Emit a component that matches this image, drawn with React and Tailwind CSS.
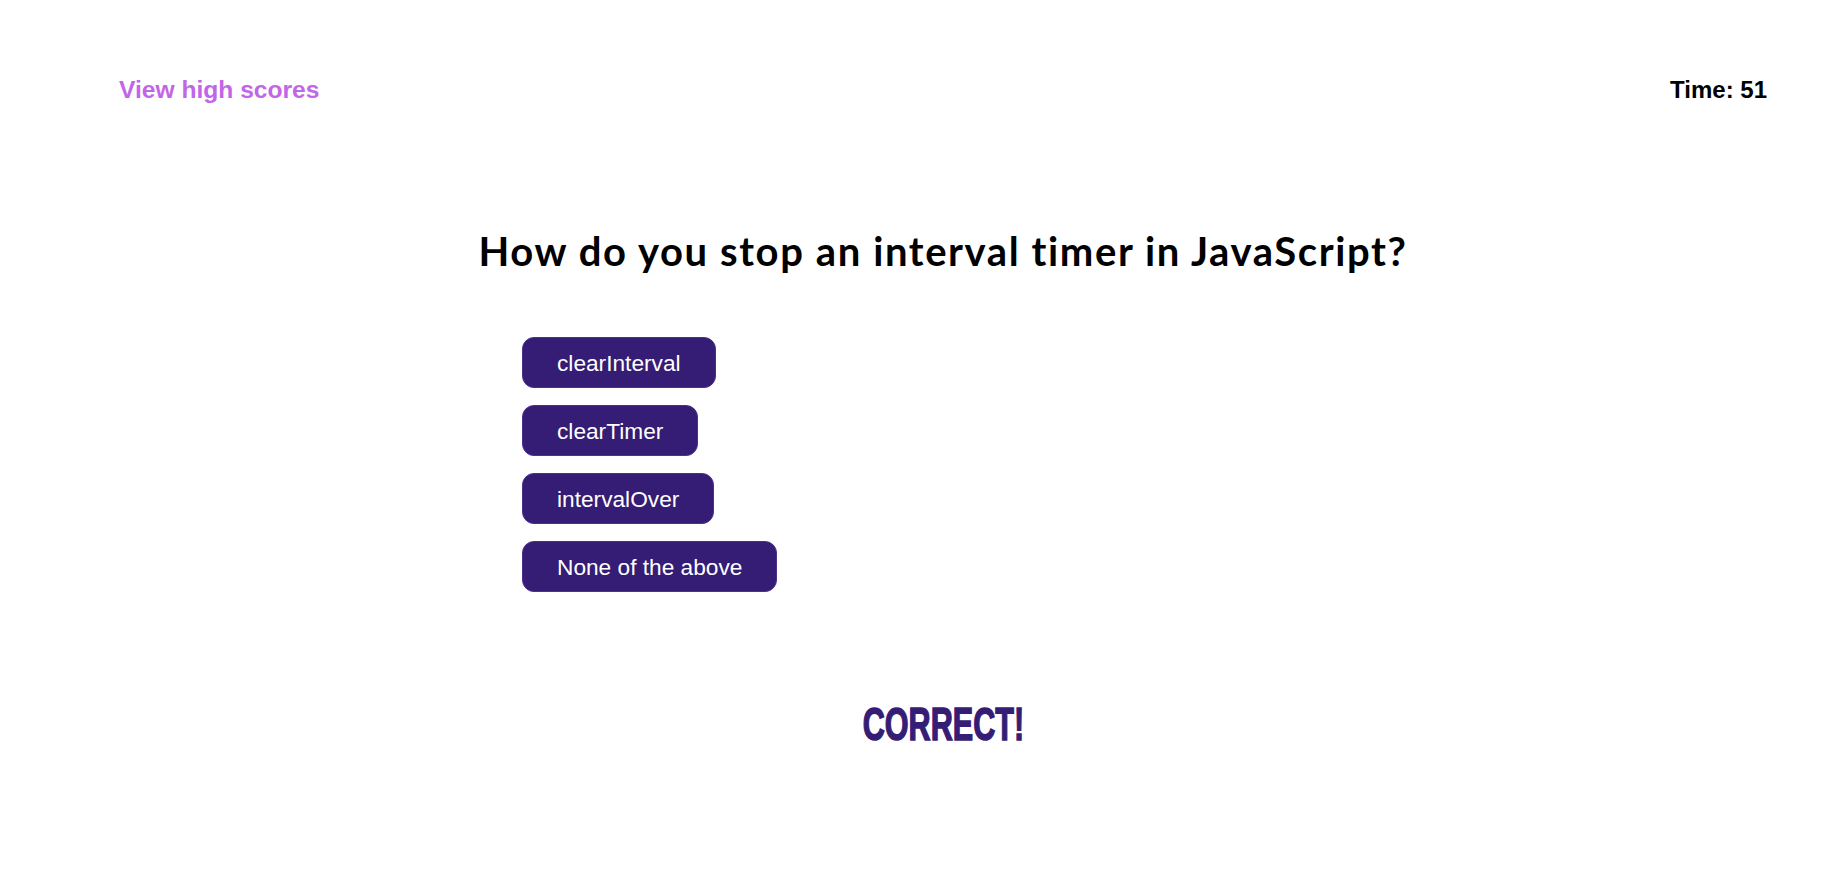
import React from "react";

const answers = ["clearInterval", "clearTimer", "intervalOver", "None of the above"];

export default function App() {
  return (
    <div className="min-h-[877px] w-full bg-white" style={{ fontFamily: '"Liberation Sans", Arial, sans-serif' }}>
      <header className="flex items-start justify-between pt-[76px] pl-[119px] pr-[59px]">
        <a className="text-[24.6px] leading-[28px] font-bold text-[#c266e8]">View high scores</a>
        <div className="text-[24px] leading-[28px] font-bold text-black">Time: 51</div>
      </header>
      <main className="pl-[60px]">
        <h1
          className="mt-[123px] text-center text-[40px] leading-[48px] font-bold tracking-[1.6px] text-black"
          style={{ fontFamily: 'Lato, "Open Sans", sans-serif' }}
        >
          How do you stop an interval timer in JavaScript?
        </h1>
        <div className="mt-[62px] flex flex-col items-start gap-[17px] pl-[462px]">
          {answers.map((a) => (
            <button
              key={a}
              className="h-[51px] rounded-[12px] border border-[#4a3288] bg-[#351c75] px-[34px] text-[22.7px] leading-[26px] text-white"
            >
              {a}
            </button>
          ))}
        </div>
        <div className="mt-[107px] flex justify-center">
          <span className="inline-block scale-x-[0.665] text-[46px] leading-[50px] font-bold text-[#351c75] [-webkit-text-stroke:1.5px_#351c75]">
            CORRECT!
          </span>
        </div>
      </main>
    </div>
  );
}
